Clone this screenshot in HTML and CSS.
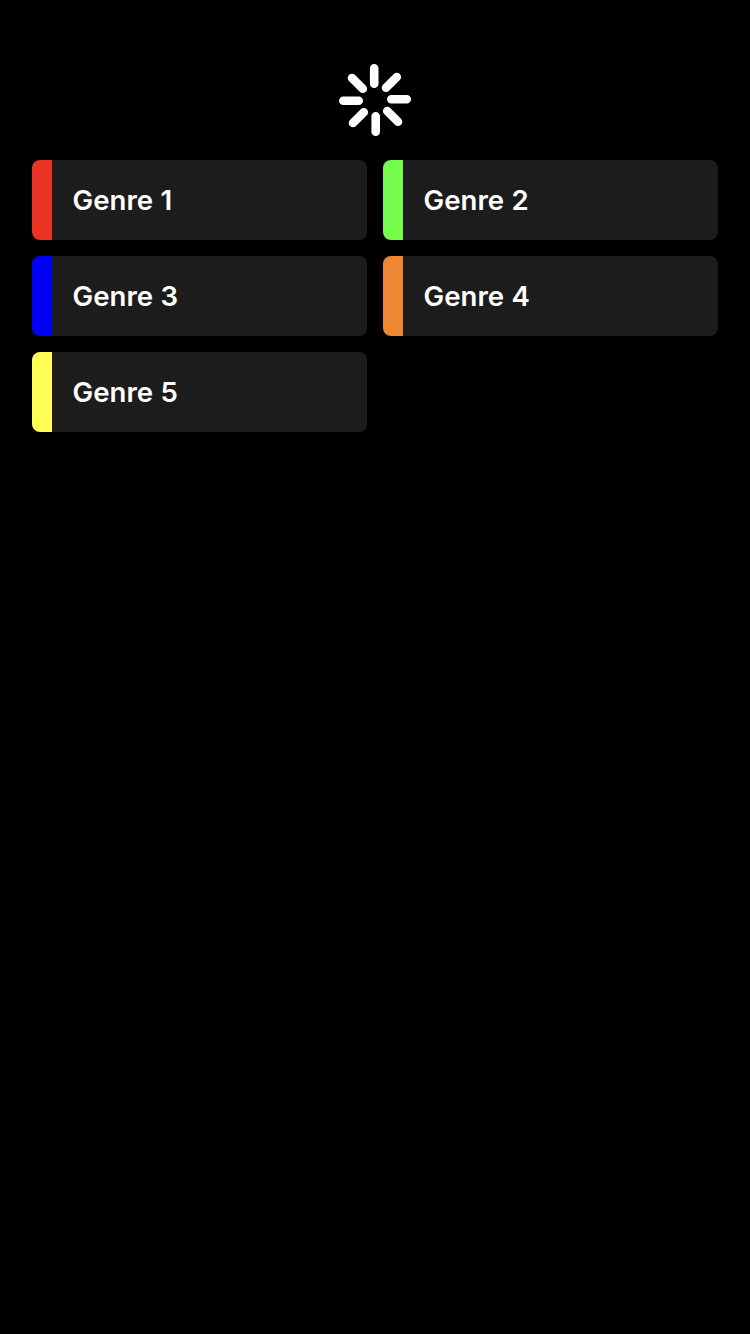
FILE: index.html
```html
<!DOCTYPE html>
<html lang="en">
<head>
<meta charset="utf-8">
<title>Genres</title>
<link rel="stylesheet" href="styles.css">
</head>
<body>
<main class="screen">
  <svg class="spinner" viewBox="0 0 72 72" aria-label="Loading">
    <path d="M35.200 4.300V19.700M57.800 13L47 23.800M67.700 35.200H52.300M59 57.800L48.200 47M36.700 67.700V52.300M14 59L24.800 48.200M4.300 36.700H19.700M13 14L23.800 24.800"/>
  </svg>
  <div class="genres">
    <div class="genre red">Genre 1</div>
    <div class="genre green">Genre 2</div>
    <div class="genre blue">Genre 3</div>
    <div class="genre orange">Genre 4</div>
    <div class="genre yellow">Genre 5</div>
  </div>
</main>
</body>
</html>
```
FILE: styles.css
```css
body { margin: 0; background: #000; }
.screen { box-sizing: border-box; min-height: 1334px; padding: 64px 32px 0; background: #000; }
.spinner { display: block; width: 72px; height: 72px; margin: 0 auto 24px; fill: none; stroke: #fff; stroke-width: 8.6; stroke-linecap: round; }
.genres { display: grid; grid-template-columns: 1fr 1fr; gap: 16px; }
.genre { display: flex; align-items: center; height: 80px; box-sizing: border-box; padding: 0 0 0 40.6px; border-radius: 8px; color: #fff; font: 560 27.6px/34px Inter, sans-serif; word-spacing: 0.5px; }
.red { background: linear-gradient(to right, #eb3323 20px, #1c1c1c 20px); }
.green { background: linear-gradient(to right, #75fb4c 20px, #1c1c1c 20px); }
.blue { background: linear-gradient(to right, #0000f5 20px, #1c1c1c 20px); }
.orange { background: linear-gradient(to right, #ef8732 20px, #1c1c1c 20px); }
.yellow { background: linear-gradient(to right, #fffe54 20px, #1c1c1c 20px); }
```
